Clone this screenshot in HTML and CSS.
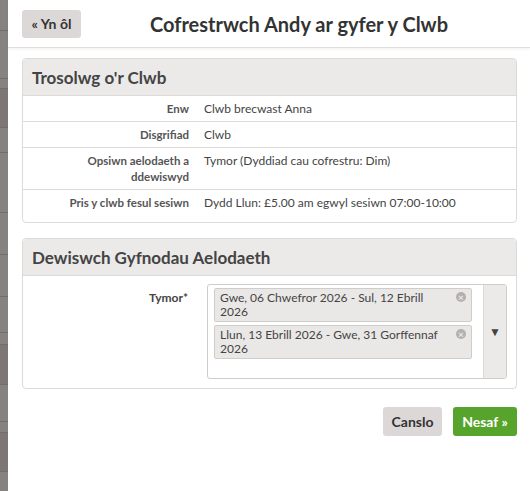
FILE: index.html
```html
<!DOCTYPE html>
<html lang="cy">
<head>
<meta charset="utf-8">
<title>Cofrestrwch Andy ar gyfer y Clwb</title>
<link rel="stylesheet" href="styles.css">
</head>
<body>
<div class="strip">
  <div class="seg h31"></div>
  <div class="seg h48"></div>
  <div class="seg h10"></div>
  <div class="seg h39 dark"></div>
  <div class="seg h25"></div>
  <div class="seg h60"></div>
  <div class="seg h42"></div>
  <div class="seg h42"></div>
  <div class="seg h36"></div>
  <div class="seg h12"></div>
  <div class="seg h40 dark"></div>
  <div class="seg h37"></div>
  <div class="seg h11"></div>
  <div class="seg h39 dark"></div>
  <div class="seg h40"></div>
</div>
<main class="main">
  <header class="topbar">
    <a class="btn btn-back" href="#">« Yn ôl</a>
    <h1 class="title">Cofrestrwch Andy ar gyfer y Clwb</h1>
  </header>

  <section class="panel panel-first">
    <div class="panel-head"><h2>Trosolwg o'r Clwb</h2></div>
    <div class="info">
      <div class="row"><div class="lbl">Enw</div><div class="val">Clwb brecwast Anna</div></div>
      <div class="row"><div class="lbl">Disgrifiad</div><div class="val">Clwb</div></div>
      <div class="row"><div class="lbl">Opsiwn aelodaeth a ddewiswyd</div><div class="val">Tymor (Dyddiad cau cofrestru: Dim)</div></div>
      <div class="row"><div class="lbl">Pris y clwb fesul sesiwn</div><div class="val">Dydd Llun: £5.00 am egwyl sesiwn 07:00-10:00</div></div>
    </div>
  </section>

  <section class="panel panel-second">
    <div class="panel-head"><h2>Dewiswch Gyfnodau Aelodaeth</h2></div>
    <div class="form-body">
      <div class="form-row">
        <label class="form-lbl">Tymor*</label>
        <div class="select">
          <div class="tags">
            <div class="tag">Gwe, 06 Chwefror 2026 - Sul, 12 Ebrill 2026<span class="x">×</span></div>
            <div class="tag">Llun, 13 Ebrill 2026 - Gwe, 31 Gorffennaf 2026<span class="x">×</span></div>
          </div>
          <div class="arrow">▼</div>
        </div>
      </div>
    </div>
  </section>

  <div class="actions">
    <a class="btn btn-cancel" href="#">Canslo</a>
    <a class="btn btn-next" href="#">Nesaf »</a>
  </div>
</main>
</body>
</html>
```
FILE: styles.css
```css
* { box-sizing: border-box; }
html, body { height: 100%; }
body {
  margin: 0;
  display: flex;
  font-family: Lato, "Open Sans", sans-serif;
  color: #444;
  background: #fff;
}
.strip {
  width: 8px;
  flex: none;
  display: flex;
  flex-direction: column;
  background: #868280;
}
.seg { background: #868280; border-bottom: 1px solid #716d6b; flex: none; }
.seg.dark { background: #7c7775; }
.h10 { height: 10px; } .h11 { height: 11px; } .h12 { height: 12px; }
.h25 { height: 25px; } .h31 { height: 31px; } .h36 { height: 36px; }
.h37 { height: 37px; } .h39 { height: 39px; } .h40 { height: 40px; }
.h42 { height: 42px; } .h48 { height: 48px; } .h60 { height: 60px; }

.main { flex: 1; min-width: 0; }

.topbar {
  height: 48px;
  display: flex;
  align-items: center;
  padding: 0 13px 0 14px;
  border-bottom: 1px solid #e0dedd;
  box-shadow: 0 2px 2px rgba(0,0,0,0.04);
}
.btn {
  display: inline-flex;
  align-items: center;
  justify-content: center;
  text-decoration: none;
  font-weight: 700;
  border-radius: 3px;
}
.btn-back {
  width: 59px;
  height: 28px;
  background: #dcd8d7;
  color: #333;
  font-size: 14px;
}
.title {
  flex: 1;
  margin: 0;
  text-align: center;
  font-size: 20px;
  font-weight: 700;
  color: #333;
}

.panel {
  margin: 0 13px 0 14px;
  border: 1px solid #dcdbda;
  border-radius: 4px;
  overflow: hidden;
}
.panel-first { margin-top: 10px; }
.panel-second { margin-top: 15px; }
.panel-head {
  height: 37px;
  background: #ebeae9;
  border-bottom: 1px solid #dcdbda;
  display: flex;
  align-items: center;
  padding-left: 9px;
}
.panel-head h2 {
  margin: 0;
  font-size: 17px;
  font-weight: 700;
  color: #444;
}
.info { padding-bottom: 7px; }
.row {
  display: grid;
  grid-template-columns: 173px 1fr;
  border-bottom: 1px solid #dcdbda;
  font-size: 12px;
  line-height: 16px;
}
.row:last-child { border-bottom: none; }
.lbl {
  padding: 5px 7px 4px 36px;
  text-align: right;
  font-size: 11.5px;
  font-weight: 700;
  color: #555;
}
.val {
  padding: 5px 8px 4px;
  color: #444;
}

.form-body { padding: 8px 9px 9px 0; }
.form-row {
  display: grid;
  grid-template-columns: 173px 1fr;
  column-gap: 11px;
}
.form-lbl {
  padding: 6px 8px 0 0;
  text-align: right;
  font-size: 12px;
  font-weight: 700;
  color: #444;
}
.select {
  display: flex;
  border: 1px solid #cfcdcc;
  border-radius: 3px;
  height: 95px;
  overflow: hidden;
}
.tags {
  flex: 1;
  padding: 3px 11px 0 6px;
  display: flex;
  flex-direction: column;
  gap: 3px;
}
.tag {
  position: relative;
  background: #eae8e7;
  border: 1px solid #cfcdcc;
  border-radius: 2px;
  padding: 2px 24px 2px 5px;
  font-size: 12px;
  line-height: 14px;
  color: #444;
}
.x {
  position: absolute;
  top: 3px;
  right: 5px;
  width: 10px;
  height: 10px;
  border-radius: 50%;
  background: #b3b0ae;
  color: #eae8e7;
  font-size: 10px;
  line-height: 10px;
  text-align: center;
  font-weight: 700;
}
.arrow {
  width: 23px;
  flex: none;
  background: #ebeae9;
  border-left: 1px solid #dcdbda;
  display: flex;
  align-items: center;
  justify-content: center;
  font-size: 12px;
  color: #444;
}

.actions {
  display: flex;
  justify-content: flex-end;
  gap: 11px;
  margin: 18px 13px 0 0;
}
.btn-cancel {
  width: 59px;
  height: 29px;
  background: #dcd8d7;
  color: #333;
  font-size: 14px;
}
.btn-next {
  width: 64px;
  height: 29px;
  background: #57a42c;
  color: #fff;
  font-size: 14px;
}
```
